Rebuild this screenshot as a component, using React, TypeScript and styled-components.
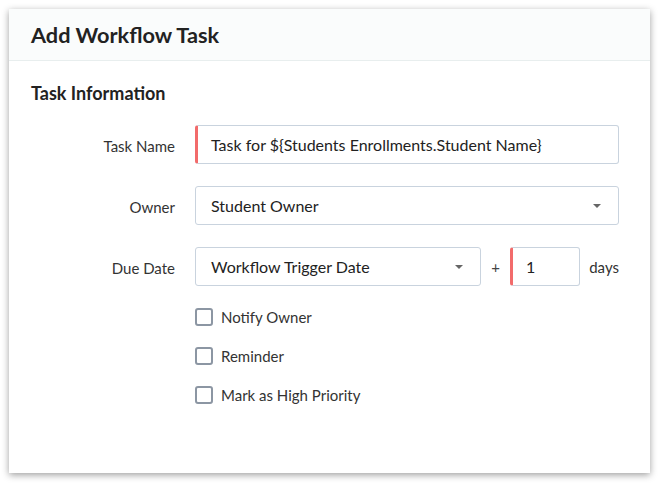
import styled, { createGlobalStyle } from 'styled-components'

const GlobalStyle = createGlobalStyle`
  html, body { margin: 0; padding: 0; background: #ffffff; min-height: 100vh; }
  body { font-family: Lato, "Open Sans", "Liberation Sans", sans-serif; color: #333333; }
  * { box-sizing: border-box; }
`

const Card = styled.div`
  margin: 9px 0 10px 9px;
  width: 641px;
  height: 464px;
  background: #ffffff;
  box-shadow: 0 2px 7px rgba(0, 0, 0, 0.38);
  display: flex;
  flex-direction: column;
`

const Header = styled.div`
  height: 52px;
  padding: 0 22px;
  display: flex;
  align-items: center;
  background: #fafcfc;
  border-bottom: 1px solid #e8eeee;
`

const Title = styled.h1`
  margin: 0;
  font-size: 21.7px;
  font-weight: 700;
  color: #222222;
`

const Body = styled.div`
  padding: 21px 31px 0 22px;
`

const SectionTitle = styled.h2`
  margin: 0 0 21px;
  font-size: 18px;
  font-weight: 700;
  color: #222222;
`

const Form = styled.div`
  display: grid;
  grid-template-columns: 144px 1fr;
  column-gap: 20px;
  row-gap: 22px;
  align-items: center;
`

const Label = styled.label`
  text-align: right;
  font-size: 15px;
  color: #333333;
  padding-top: 2px;
`

const Field = styled.div<{ $required?: boolean; $width?: string }>`
  position: relative;
  height: 39px;
  width: ${p => p.$width ?? '100%'};
  border: 1px solid #c9d3de;
  border-left: ${p => (p.$required ? '3px solid #f26b6b' : '1px solid #c9d3de')};
  border-radius: 3px;
  display: flex;
  align-items: center;
  padding-left: ${p => (p.$required ? '13px' : '15px')};
  font-size: 16px;
  color: #222222;
`

const Arrow = styled.span`
  position: absolute;
  right: 17px;
  top: 17px;
  width: 0;
  height: 0;
  border-left: 4px solid transparent;
  border-right: 4px solid transparent;
  border-top: 4px solid #666666;
`

const DueRow = styled.div`
  display: flex;
  align-items: center;
`

const Plus = styled.span`
  width: 29px;
  text-align: center;
  font-size: 15px;
  color: #444444;
`

const Days = styled.span`
  margin-left: auto;
  font-size: 15px;
  color: #333333;
`

const Checks = styled.div`
  grid-column: 2;
  display: flex;
  flex-direction: column;
  gap: 21px;
`

const CheckRow = styled.label`
  display: flex;
  align-items: center;
  gap: 8px;
  font-size: 15px;
  color: #333333;
  height: 18px;
`

const Box = styled.span`
  width: 18px;
  height: 18px;
  border: 2px solid #8c96a3;
  border-radius: 3px;
  flex: none;
`

const Select = ({ value, width }: { value: string; width?: string }) => (
  <Field $width={width}>
    {value}
    <Arrow />
  </Field>
)

export default function App() {
  return <>
    <GlobalStyle />
    <Card>
      <Header>
        <Title>Add Workflow Task</Title>
      </Header>
      <Body>
        <SectionTitle>Task Information</SectionTitle>
        <Form>
          <Label>Task Name</Label>
          <Field $required>{'Task for ${Students Enrollments.Student Name}'}</Field>

          <Label>Owner</Label>
          <Select value='Student Owner' />

          <Label>Due Date</Label>
          <DueRow>
            <Select value='Workflow Trigger Date' width='286px' />
            <Plus>+</Plus>
            <Field $required $width='70px'>1</Field>
            <Days>days</Days>
          </DueRow>

          <Checks>
            {['Notify Owner', 'Reminder', 'Mark as High Priority'].map(text => <CheckRow key={text}>
              <Box />
              {text}
            </CheckRow>)}
          </Checks>
        </Form>
      </Body>
    </Card>
  </>
}
